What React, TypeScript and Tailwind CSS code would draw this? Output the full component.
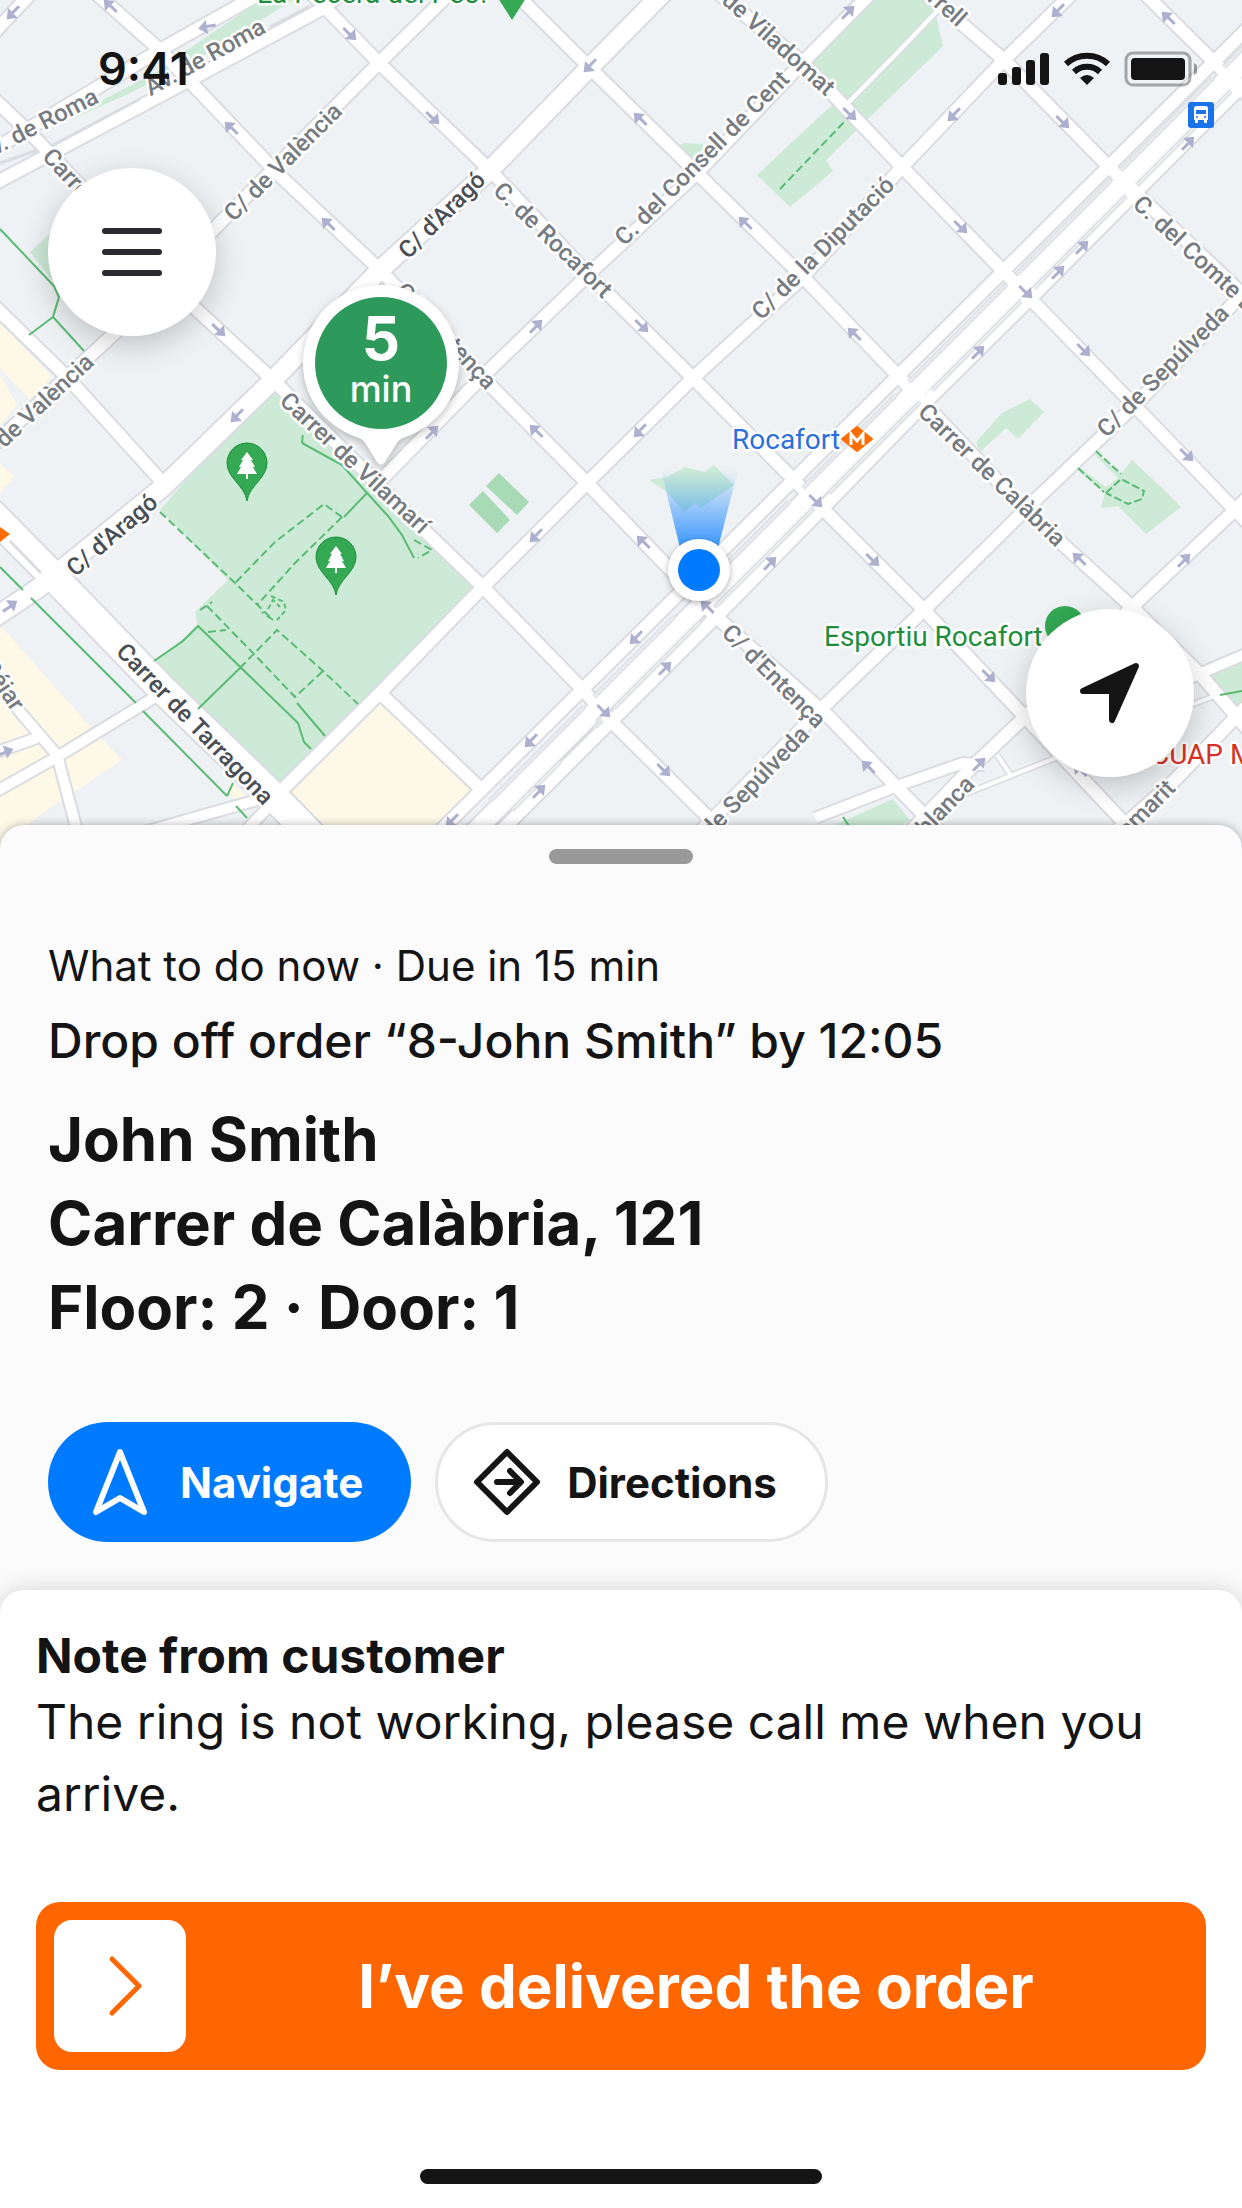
import type { ReactNode } from "react";

const street = [
  // down-right streets
  "M90 -12L160 50L277 173L380 270L482 377L587 483L712 613L829 717L950 842",
  "M310 -8L379 63L490 170L587 273L693 378L797 483L924 610L1025 717L1142 842",
  "M510 -12L590 68L697 173L803 277L902 380L1025 510L1132 607L1199 673L1250 732",
  "M712 -12L802 62L902 167L1009 277L1132 403L1235 510L1260 535",
  "M920 -12L1004 60L1112 170L1235 287L1260 312",
  "M1139 -12L1215 63L1260 108",
  "M-10 95L37 140L197 310L273 380L427 533L483 587L583 690L610 720L735 844",
  "M-10 302L67 377L163 483",
  "M380 693L482 790",
  // up-right streets
  "M-12 39L36 -12",
  "M-12 153L160 50L270 -12",
  "M-12 187L190 80L320 10L350 -12",
  "M-12 450L117 331L213 230L379 63L455 -12",
  "M383 478L482 377L590 273L697 173L803 62L876 -12",
  "M277 795L380 693L483 587L587 483L693 378L803 277L902 167L1004 60L1078 -12",
  "M427 844L1260 16",
  "M488 844L717 616L823 508L932 396L1035 294L1135 193L1260 68",
  "M690 842L817 713L924 610L1025 510L1135 405L1260 276",
  "M900 842L972 767L1025 717L1132 607L1235 510L1260 485",
  "M1105 842L1175 780L1235 718L1260 693",
];

const wideStreet = [
  "M-12 622L40 587L163 487L273 380L380 270L490 170L590 67L668 -12",
  "M462 844L1260 46",
];

const smallStreet = [
  "M-12 664L20 712L57 755L80 842",
  "M-12 796L57 757L160 694",
  "M-12 755L37 738",
  "M130 836L257 800",
  "M235 842L275 800",
  "M815 818L900 785L963 763L985 765",
  "M1185 680L1260 648",
];

const lane = ["M955 798L1058 757L1130 728L1212 697", "M997 755L1012 777", "M848 103L900 50L940 8"];

// strips between the carriageways of Gran Via
const medians =
  "M490 801L584 707M594 697L674 617M722 569L789 502M803 488L896 395M909 382L1006 285M1017 274L1110 181M1121 170L1213 78M1224 67L1250 41" +
  "M512 810L560 762M595 727L602 720M614 708L700 622M716 606L814 508M829 493L920 402M932 390L1021 301M1034 288L1126 196M1137 185L1231 91";

type Label = { text: string; x: number; y: number; r: number; dark?: boolean; anchor?: "start" | "middle" | "end" };

const labels: Label[] = [
  { text: "Av. de Roma", x: 205, y: 57, r: -29 },
  { text: "Av. de Roma", x: 37, y: 125, r: -27 },
  { text: "Carrer", x: 47, y: 152, r: 47, anchor: "start" },
  { text: "C/ de València", x: 283, y: 162, r: -45 },
  { text: "C/ de València", x: 33, y: 411, r: -43 },
  { text: "C/ d'Aragó", x: 442, y: 215, r: -45, dark: true },
  { text: "C/ d'Aragó", x: 112, y: 535, r: -41, dark: true },
  { text: "C. de Rocafort", x: 553, y: 240, r: 44 },
  { text: "C. del Consell de Cent", x: 702, y: 158, r: -45 },
  { text: "C. de Viladomat", x: 768, y: 34, r: 42 },
  { text: "C/ de la Diputació", x: 823, y: 248, r: -45 },
  { text: "Comte Borrell", x: 963, y: 22, r: 42, anchor: "end" },
  { text: "C. del Comte Borrell", x: 1137, y: 200, r: 43, anchor: "start" },
  { text: "C/ de Sepúlveda", x: 1163, y: 371, r: -45 },
  { text: "Carrer de Calàbria", x: 992, y: 475, r: 44 },
  { text: "C/ d'Entença", x: 774, y: 676, r: 45 },
  { text: "C/ d'Entença", x: 446, y: 336, r: 47 },
  { text: "C/ de Sepúlveda", x: 744, y: 793, r: -46 },
  { text: "Floridablanca", x: 970, y: 780, r: -46, anchor: "end" },
  { text: "C/ de Tamarit", x: 1171, y: 784, r: -45, anchor: "end" },
  { text: "Carrer de Tarragona", x: 195, y: 724, r: 46, dark: true },
  { text: "Carrer de Vilamarí", x: 355, y: 463, r: 43 },
  { text: "Béjar", x: 19, y: 708, r: 56, anchor: "end" },
];

// x, y, heading in degrees
const arrows = [
  [13, 13, 135], [110, 6, -135], [207, 27, 170], [350, 34, 45], [231, 128, -135], [328, 224, -135],
  [219, 330, 45], [237, 416, 135], [433, 118, 45], [590, 66, 135], [640, 119, -135], [745, 223, -135],
  [536, 326, -45], [642, 326, 45], [848, 12, -45], [850, 114, 45], [1058, 11, 135], [954, 115, 135],
  [1168, 18, -135], [1063, 122, 45], [1188, 143, -45], [961, 227, 45], [1082, 247, -45], [1058, 272, -45],
  [1026, 292, 45], [978, 352, -45], [854, 334, -135], [1084, 350, 45], [432, 432, -45], [536, 431, -135],
  [640, 431, 135], [536, 536, 135], [643, 542, -135], [816, 501, 45], [770, 563, -45], [707, 607, -135],
  [636, 638, 135], [665, 668, -45], [604, 711, 45], [531, 741, 135], [539, 791, -45], [664, 770, 45],
  [452, 821, 135], [1187, 455, 45], [1184, 560, -45], [1079, 559, -135], [873, 560, 45], [989, 676, 45],
  [868, 767, -135], [979, 764, -45], [1080, 770, -135], [10, 606, -35], [5, 752, -20],
];

function RoadSet({ paths, width }: { paths: string[]; width: number }) {
  return (
    <g fill="none" strokeLinejoin="round">
      {paths.map((d) => (
        <path key={d} d={d} strokeWidth={width} />
      ))}
    </g>
  );
}

function TreePin({ x, y }: { x: number; y: number }) {
  return (
    <g transform={`translate(${x} ${y})`}>
      <path d="M0 57C-2 42 -20 34 -20 19A20 20 0 0 1 20 19C20 34 2 42 0 57Z" fill="#34a853" stroke="#1e8e3e" strokeWidth="1" />
      <path d="M0 8L6 16H4L8 23H6L10 30H1V35H-1V30H-10L-6 23H-8L-4 16H-6Z" fill="#fff" />
    </g>
  );
}

function CityMap() {
  return (
    <svg className="block h-full w-full" viewBox="0 0 1242 849" preserveAspectRatio="xMidYMid slice" role="img" aria-label="Map">
      <rect width="1242" height="849" fill="#eef2f4" />

      <g fill="#fef8e7">
        <path d="M0 323L52 377L30 400L0 368Z" />
        <path d="M0 375L17 405L0 425Z" />
        <path d="M0 463L15 477L0 493Z" />
        <path d="M0 625L87 723L122 760L40 815L0 849Z" />
        <path d="M383 700L474 790L420 849H320L283 795Z" />
        <path d="M232 782L250 800L240 802L226 792Z" />
      </g>
      <path d="M165 515L228 580L195 612L198 626L153 663L60 585Z" fill="#f0f2f5" />

      <g fill="#cdead6">
        <path d="M262 392H280L475 588L272 790L153 663L198 626L195 612L228 580L160 510Z" />
        <path d="M30 252L52 232V280Z" />
        <path d="M679 145L684 143L703 144V150L691 158Z" />
        <path d="M808 62L872 -5H930L936 15L943 46L826 160L833 171L790 207L757 175L832 105Z" />
        <path d="M976 442L1002 413L1030 399L1044 412L1018 439L1006 428L980 452Z" />
        <path d="M1094 451L1121 474L1132 460L1164 490L1181 507L1146 534L1118 506L1101 508L1105 493L1075 468L1080 468L1106 487L1118 478L1092 452Z" />
        <path d="M1203 675L1242 657V702L1234 708Z" />
        <path d="M830 827L893 799L910 820L890 835H830Z" />
      </g>
      <g fill="#a8dab5">
        <path d="M499 473L529 502L517 515L486 486Z" />
        <path d="M483 491L510 520L497 533L469 505Z" />
      </g>
      <path d="M649 480L667 477L685 467L705 472L714 465L734 485L701 508L695 503L684 512L667 492Z" fill="#cdead6" />

      <g stroke="#dadce1">
        <RoadSet paths={lane} width={7} />
        <RoadSet paths={smallStreet} width={14} />
        <RoadSet paths={street} width={16} />
        <RoadSet paths={wideStreet} width={22} />
        <RoadSet paths={["M-12 510L50 573L160 687L277 800L325 849"]} width={32} />
      </g>
      <path d="M95 104L160 70L187 50L258 2L300 -4L200 58L130 93L70 120Z" fill="#cdead6" />
      <g stroke="#fff">
        <RoadSet paths={lane} width={4} />
        <RoadSet paths={smallStreet} width={10} />
        <RoadSet paths={street} width={12} />
        <RoadSet paths={wideStreet} width={18} />
        <RoadSet paths={["M-12 510L50 573L160 687L277 800L325 849"]} width={28} />
      </g>
      <path d={medians} stroke="#dee0e5" strokeWidth="5" fill="none" />
      <path d={medians} stroke="#e9edef" strokeWidth="2" fill="none" />
      <path d="M593 730L596 718L603 714L600 725Z" fill="#e3e6e9" />
      <path d="M10 541L41 573M0 163L38 150M52 146L140 99M270 27L310 6" stroke="#dadce1" strokeWidth="3" fill="none" />

      <g fill="none" stroke="#5bbb75" strokeWidth="2">
        <path d="M0 229L54 286L59 297L53 317L84 351M53 317L29 335" />
        <path d="M0 567L23 590M31 598L136 703M143 711L227 796M227 796L233 783M236 806L247 818" />
        <path d="M154 661L183 641L198 626L298 723L304 742L311 749M198 709L240 668M297 703L325 736" />
        <path d="M302 443L342 465L367 493L344 517M367 493L388 516L402 535L414 558" />
        <path d="M342 517L324 504L275 542L235 583M342 517L296 562L258 604M160 512L235 583L273 620L262 612M200 610L212 602M207 606L255 655L295 697L323 671M208 632L226 630M240 668L277 630L323 671L358 704M302 443L303 433M414 540L432 550L418 558" strokeDasharray="8 4" />
        <path d="M271 596L284 602L286 610L277 620M268 609L273 600L280 607" strokeDasharray="5 3" />
        <path d="M780 189L846 120" strokeDasharray="8 4" />
        <path d="M1106 493L1121 479L1144 491L1142 499L1128 504L1106 493M1096 451L1121 474M1078 468L1104 492" strokeDasharray="8 3" />
        <path d="M1220 695L1242 691M843 817L853 832" />
      </g>

      {arrows.map(([x, y, r]) => (
        <path
          key={`${x}-${y}`}
          transform={`translate(${x} ${y}) rotate(${r})`}
          d="M-9 -1H0V-7L9 0L0 7V2H-9Z"
          fill="#adb1cf"
        />
      ))}

      <g fontFamily="Roboto, sans-serif" fontSize="24" fontWeight="500" strokeLinejoin="round" paintOrder="stroke">
        {labels.map((l) => (
          <text
            key={`${l.text}-${l.x}`}
            transform={`translate(${l.x} ${l.y}) rotate(${l.r})`}
            dy="8"
            textAnchor={l.anchor ?? "middle"}
            fill={l.dark ? "#4a4f55" : "#757b81"}
            stroke="#fff"
            strokeWidth="5"
          >
            {l.text}
          </text>
        ))}
      </g>
      <g fontFamily="Roboto, sans-serif" fontSize="28" stroke="#fff" strokeWidth="5" strokeLinejoin="round" paintOrder="stroke">
        <text x="257" y="3" fill="#1e8e3e">La Pecera del Peó!</text>
        <text x="732" y="449" fill="#2a6fdb">Rocafort</text>
        <text x="824" y="646" fill="#1e8e3e">Esportiu Rocafort</text>
        <text x="1151" y="764" fill="#d93025">CUAP Manso</text>
      </g>

      <path d="M498 -2H526L512 20Z" fill="#34a853" />
      <TreePin x={247} y={444} />
      <TreePin x={336} y={538} />
      <circle cx="1065" cy="626" r="20" fill="#34a853" />
      <path d="M0 527L10 534L0 542Z" fill="#ff6d00" />
      <path d="M842 439L857 427L872 439L857 451Z" fill="#ff6d00" stroke="#ff6d00" strokeWidth="2" strokeLinejoin="round" />
      <path d="M851 445V434L857 441L863 434V445" fill="none" stroke="#fff" strokeWidth="3" />

      {/* bus stop */}
      <rect x="1188" y="102" width="26" height="26" rx="3" fill="#1a73e8" />
      <path d="M1194 108Q1194 106 1197 106H1205Q1208 106 1208 108V120H1207V123H1204V120H1198V123H1195V120H1194Z" fill="#fff" />
      <path d="M1196 110H1206V114H1196Z" fill="#1a73e8" />
      <circle cx="1197" cy="117" r="1" fill="#1a73e8" />
      <circle cx="1205" cy="117" r="1" fill="#1a73e8" />
    </svg>
  );
}

function EtaPin() {
  return (
    <div className="absolute top-[285px] left-[303px] flex h-[180px] w-[156px] flex-col items-center text-white">
      <svg className="absolute inset-0 overflow-visible drop-shadow-[0_3px_4px_rgba(0,0,0,0.25)]" width="156" height="180" viewBox="0 0 156 180" aria-hidden="true">
        <path d="M56 153C28 144 0 118 0 78A78 78 0 0 1 156 78C156 118 128 144 100 153Q95 155 92 161L82 177Q78 182 74 177L64 161Q61 155 56 153Z" fill="#fff" />
        <circle cx="78" cy="78" r="66" fill="#2d9a5b" />
      </svg>
      <span className="relative mt-5 text-[60px] leading-[66px] font-bold">5</span>
      <span className="relative text-[36px] leading-[36px] font-medium">min</span>
    </div>
  );
}

function CurrentPosition() {
  return (
    <svg className="absolute top-[470px] left-[657px] overflow-visible" width="84" height="140" viewBox="0 0 84 140" aria-label="Your position">
      <defs>
        <linearGradient id="beam" x1="0" y1="0" x2="0" y2="1">
          <stop offset="0" stopColor="#007aff" stopOpacity="0" />
          <stop offset="1" stopColor="#007aff" stopOpacity="0.8" />
        </linearGradient>
      </defs>
      <path d="M4 0H81L60 82H24Z" fill="url(#beam)" />
      <circle className="drop-shadow-[0_2px_3px_rgba(0,0,0,0.3)]" cx="42" cy="100" r="31" fill="#fff" />
      <circle cx="42" cy="100" r="21" fill="#007aff" />
    </svg>
  );
}

function StatusBar() {
  return (
    <div className="absolute inset-x-0 top-0 flex h-[132px] justify-between pt-[41px] pr-[45px] pl-[98px] text-[#141414]">
      <span className="text-[45px] leading-[56px] font-semibold">9:41</span>
      <svg className="mt-2" width="200" height="40" viewBox="997 49 200 40" fill="#141414" aria-hidden="true">
        <rect x="998" y="73" width="9" height="12" rx="3" />
        <rect x="1012" y="67" width="9" height="18" rx="3" />
        <rect x="1026" y="60" width="9" height="25" rx="3" />
        <rect x="1040" y="53" width="9" height="32" rx="3" />
        <g fill="none" stroke="#141414" strokeWidth="6">
          <path d="M1066 64A31 31 0 0 1 1108 64" />
          <path d="M1074 72A19 19 0 0 1 1100 72" />
        </g>
        <path d="M1087 85L1080 78Q1087 72 1094 78Z" />
        <rect x="1126" y="53" width="64" height="32" rx="7" fill="none" stroke="#141414" strokeOpacity="0.35" strokeWidth="3" />
        <rect x="1131" y="58" width="54" height="22" rx="4" />
        <path d="M1194 63Q1198 65 1198 69Q1198 73 1194 75Z" opacity="0.4" />
      </svg>
    </div>
  );
}

function RoundButton({ label, className, children }: { label: string; className: string; children: ReactNode }) {
  return (
    <button
      type="button"
      aria-label={label}
      className={`absolute flex h-[168px] w-[168px] items-center justify-center rounded-full bg-white shadow-[0_9px_30px_rgba(0,0,0,0.2)] ${className}`}
    >
      {children}
    </button>
  );
}

export default function App() {
  return (
    <main className="flex min-h-screen flex-col bg-[#fbfbfb] font-['Inter',sans-serif] text-[#141414]">
      <section className="relative h-[849px] shrink-0 overflow-hidden">
        <CityMap />
        <EtaPin />
        <CurrentPosition />
        <StatusBar />
        <RoundButton label="Menu" className="top-[168px] left-12">
          <svg width="72" height="72" viewBox="0 0 72 72" stroke="#2b2a30" strokeWidth="6" strokeLinecap="round" aria-hidden="true">
            <path d="M9 15H63M9 36H63M9 57H63" />
          </svg>
        </RoundButton>
        <RoundButton label="Center map" className="top-[609px] right-12">
          <svg width="72" height="72" viewBox="0 0 72 72" fill="#141414" stroke="#141414" strokeWidth="6" strokeLinejoin="round" aria-hidden="true">
            <path d="M9 34L62 9L38 63V34Z" />
          </svg>
        </RoundButton>
      </section>

      <section className="relative -mt-6 flex grow flex-col rounded-t-3xl bg-[#fbfbfb] pt-6 shadow-[0_0_9px_rgba(0,0,0,0.3)]">
        <div className="h-[15px] w-36 self-center rounded-full bg-[#999]" />

        <div className="px-12 pt-[69px] pb-12">
          <p className="text-[42px] leading-[66px]">What to do now · Due in 15 min</p>
          <p className="text-[48px] leading-[84px] font-medium">Drop off order “8-John Smith” by 12:05</p>
          <h1 className="mt-[14px] text-[60px] leading-[84px] font-bold">
            John Smith
            <br />
            Carrer de Calàbria, 121
            <br />
            Floor: 2 · Door: 1
          </h1>
          <div className="mt-[73px] flex gap-6 text-[42px] font-bold">
            <button type="button" className="flex h-[120px] items-center gap-6 rounded-full bg-[#007aff] pr-12 pl-9 text-white">
              <svg width="72" height="72" viewBox="0 0 72 72" fill="none" stroke="currentColor" strokeWidth="6" strokeLinejoin="round" aria-hidden="true">
                <path d="M36 6L60 66L36 52L12 66Z" />
              </svg>
              Navigate
            </button>
            <button type="button" className="flex h-[120px] items-center gap-6 rounded-full border-3 border-[#e6e6e6] bg-white pr-12 pl-[33px]">
              <svg width="72" height="72" viewBox="0 0 72 72" fill="none" stroke="currentColor" strokeWidth="6" strokeLinejoin="round" strokeLinecap="round" aria-hidden="true">
                <path d="M36 6L66 36L36 66L6 36Z" />
                <path d="M26 36H49M39 25L50 36L39 47" />
              </svg>
              Directions
            </button>
          </div>
        </div>

        <section className="flex grow flex-col rounded-t-3xl bg-white px-9 pt-9 pb-6 shadow-[0_0_24px_rgba(0,0,0,0.16)]">
          <h2 className="text-[48px] leading-[60px] font-bold">Note from customer</h2>
          <p className="text-[48px] leading-[72px]">The ring is not working, please call me when you arrive.</p>
          <button type="button" className="mt-[72px] flex h-[168px] items-center rounded-3xl bg-[#ff6600] p-[18px] pr-0 text-white">
            <span className="flex h-[132px] w-[132px] shrink-0 items-center justify-center rounded-[18px] bg-white">
              <svg width="72" height="72" viewBox="0 0 72 72" fill="none" stroke="#ff6600" strokeWidth="5" strokeLinecap="round" strokeLinejoin="round" aria-hidden="true">
                <path d="M28 9L55 36L28 63" />
              </svg>
            </span>
            <span className="grow text-center text-[60px] font-bold">I’ve delivered the order</span>
          </button>
          <div className="mt-auto h-[15px] w-[402px] self-center rounded-full bg-[#141414]" />
        </section>
      </section>
    </main>
  );
}
